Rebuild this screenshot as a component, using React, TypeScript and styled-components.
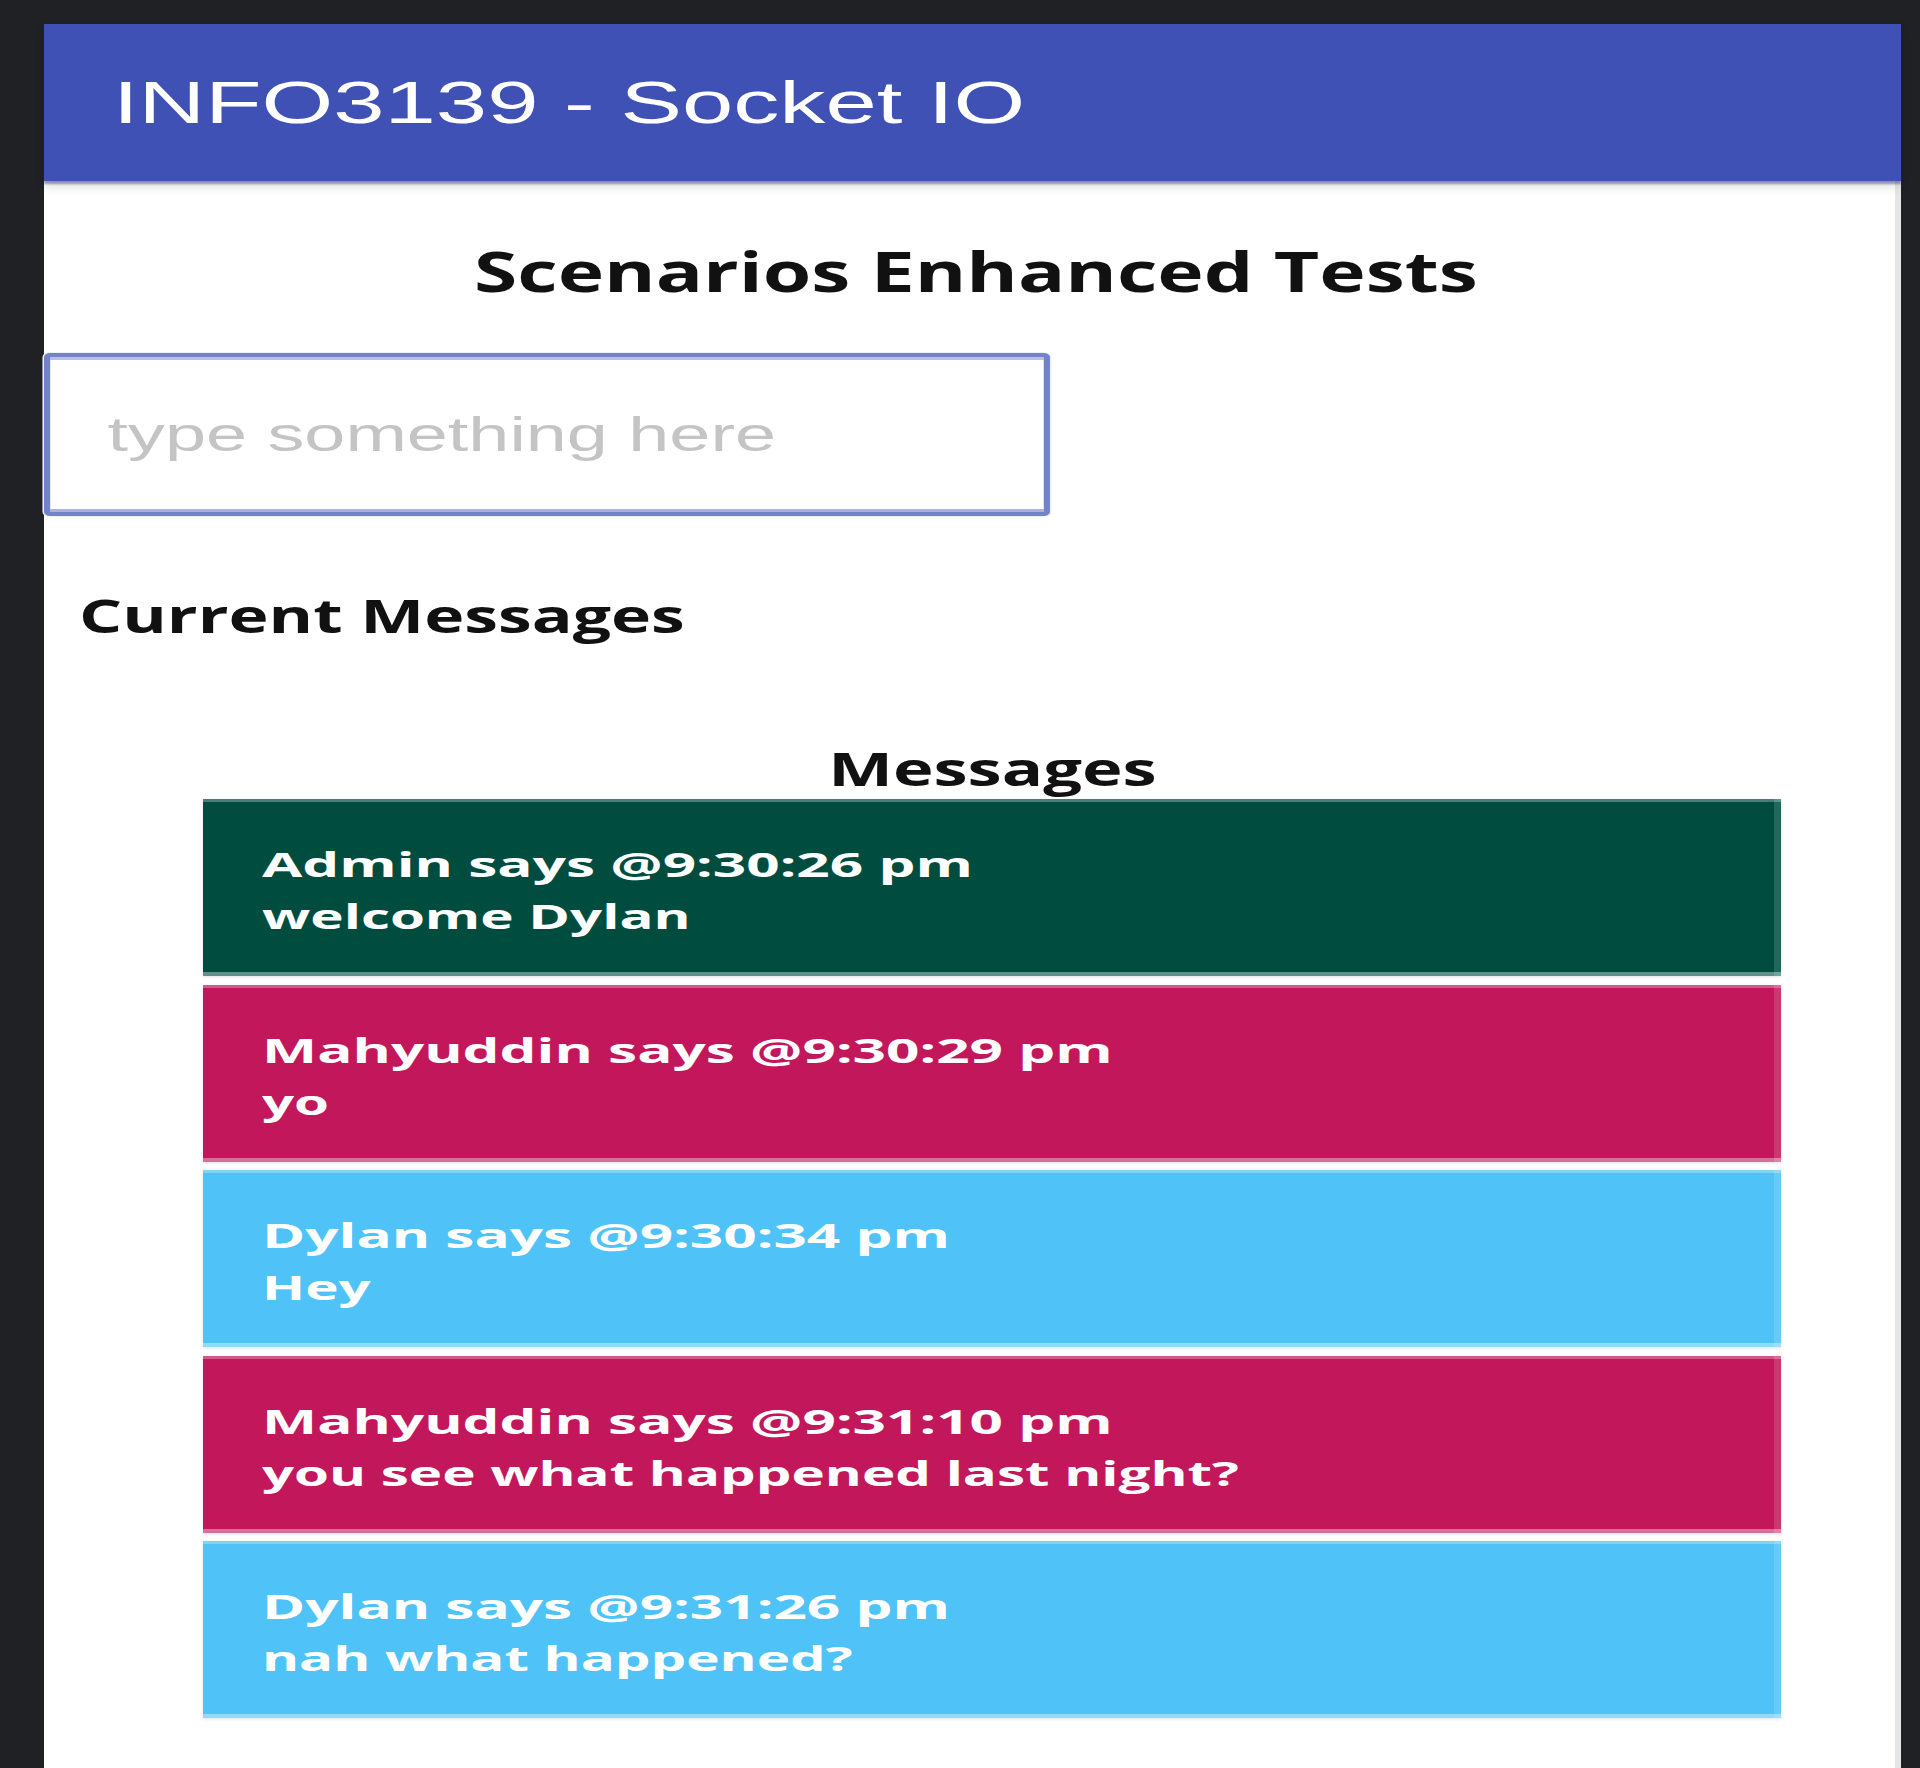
import React from "react";
import styled, { createGlobalStyle } from "styled-components";

const GlobalStyle = createGlobalStyle`
  html, body {
    margin: 0;
    padding: 0;
    background: #202124;
  }
  #root {
    min-height: 1768px;
  }
  * { box-sizing: border-box; }
`;

const Frame = styled.div`
  padding: 24px 19px 0 44px;
  min-height: 1768px;
  display: flex;
  flex-direction: column;
`;

const AppBar = styled.header`
  position: relative;
  z-index: 1;
  height: 157px;
  background: #3f51b5;
  display: flex;
  align-items: center;
  padding-left: 69px;
  box-shadow: 0 3px 2px rgba(40, 45, 90, 0.45), 0 6px 10px rgba(0, 0, 0, 0.12);
`;

const Stretch = styled.span<{ $sx: number; $origin: string }>`
  display: inline-block;
  white-space: nowrap;
  transform: scaleX(${(p) => p.$sx});
  transform-origin: ${(p) => p.$origin};
`;

const AppTitle = styled.h1`
  margin: 0;
  font-family: "Liberation Sans", Arial, sans-serif;
  font-weight: 400;
  font-size: 60px;
  line-height: 60px;
  color: #ffffff;
`;

const Content = styled.main`
  flex: 1;
  background: #ffffff;
  border-right: 6px solid #e6e6e6;
  display: flex;
  flex-direction: column;
  padding-bottom: 51px;
`;

const PageHeading = styled.h2`
  margin: 61px 0 0;
  text-align: center;
  font-family: "Open Sans", "Noto Sans", sans-serif;
  font-weight: 700;
  font-size: 56px;
  line-height: 56px;
  color: #111111;
  padding-left: 13px;
`;

const InputRow = styled.div`
  margin-top: 55px;
  height: 163px;
`;

const TextInput = styled.input`
  display: block;
  width: 649px;
  height: 163px;
  transform: scaleX(1.55);
  transform-origin: left center;
  border: 4px solid #7482c9;
  border-radius: 4px;
  padding: 0 0 0 37px;
  font-family: "Liberation Sans", Arial, sans-serif;
  font-size: 47.6px;
  color: #333;
  background: #fff;
  outline: none;
  box-shadow: inset 0 3px 0 #b9bfe6, inset 0 -3px 0 #aab2e0, 0 0 0 1px #eceef8;

  &::placeholder {
    color: #c4c4c4;
    opacity: 1;
  }
`;

const SectionHeading = styled.h3`
  margin: 76px 0 0;
  padding-left: 35px;
  font-family: "Open Sans", "Noto Sans", sans-serif;
  font-weight: 700;
  font-size: 46px;
  line-height: 46px;
  color: #111111;
`;

const MessageList = styled.section`
  margin: 107px 0 0 159px;
  width: 1578px;
  display: flex;
  flex-direction: column;
`;

const ListHeading = styled.h4`
  margin: 0 0 7px;
  text-align: center;
  font-family: "Open Sans", "Noto Sans", sans-serif;
  font-weight: 700;
  font-size: 47px;
  line-height: 47px;
  color: #111111;
`;

const Cards = styled.div`
  display: flex;
  flex-direction: column;
  gap: 8.5px;
`;

const Card = styled.div<{ $bg: string }>`
  height: 177px;
  background: ${(p) => p.$bg};
  padding: 39px 0 0 59px;
  box-shadow: inset 0 3px 0 rgba(255, 255, 255, 0.28),
    inset 0 -4px 0 rgba(255, 255, 255, 0.38),
    inset -7px 0 0 rgba(255, 255, 255, 0.14),
    0 1px 3px rgba(0, 0, 0, 0.12);
  font-family: "Open Sans", "Noto Sans", sans-serif;
  font-weight: 700;
  font-size: 34px;
  line-height: 52px;
  color: #ffffff;
`;

const CardLine = styled.div`
  height: 52px;
`;

type Message = { from: string; time: string; text: string; color: string };

const TEAL = "#004d40";
const PINK = "#c2185b";
const BLUE = "#4fc3f7";

const messages: Message[] = [
  { from: "Admin", time: "9:30:26 pm", text: "welcome Dylan", color: TEAL },
  { from: "Mahyuddin", time: "9:30:29 pm", text: "yo", color: PINK },
  { from: "Dylan", time: "9:30:34 pm", text: "Hey", color: BLUE },
  { from: "Mahyuddin", time: "9:31:10 pm", text: "you see what happened last night?", color: PINK },
  { from: "Dylan", time: "9:31:26 pm", text: "nah what happened?", color: BLUE },
];

export default function App() {
  return (
    <>
      <GlobalStyle />
      <Frame>
        <AppBar>
          <AppTitle>
            <Stretch $sx={1.537} $origin="left center">INFO3139 - Socket IO</Stretch>
          </AppTitle>
        </AppBar>
        <Content>
          <PageHeading>
            <Stretch $sx={1.402} $origin="center">Scenarios Enhanced Tests</Stretch>
          </PageHeading>
          <InputRow>
            <TextInput placeholder="type something here" />
          </InputRow>
          <SectionHeading>
            <Stretch $sx={1.475} $origin="left center">Current Messages</Stretch>
          </SectionHeading>
          <MessageList>
            <ListHeading>
              <Stretch $sx={1.461} $origin="center">Messages</Stretch>
            </ListHeading>
            <Cards>
              {messages.map((m, i) => (
                <Card key={i} $bg={m.color}>
                  <CardLine>
                    <Stretch $sx={1.72} $origin="left center">
                      {m.from} says @{m.time}
                    </Stretch>
                  </CardLine>
                  <CardLine>
                    <Stretch $sx={1.66} $origin="left center">{m.text}</Stretch>
                  </CardLine>
                </Card>
              ))}
            </Cards>
          </MessageList>
        </Content>
      </Frame>
    </>
  );
}
